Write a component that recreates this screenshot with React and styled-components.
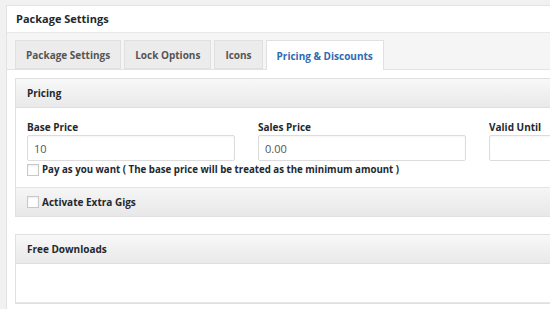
import React from 'react';
import styled, { createGlobalStyle } from 'styled-components';

const GlobalStyle = createGlobalStyle`
  html, body {
    margin: 0;
    padding: 0;
    background: #f1f1f1;
    overflow: hidden;
    font-family: "Open Sans", "Liberation Sans", Arial, sans-serif;
  }
`;

const tabs = ['Package Settings', 'Lock Options', 'Icons', 'Pricing & Discounts'];

function App() {
    return (
        <>
            <GlobalStyle />
            <Page>
                <MetaBox>
                    <BoxTitle>Package Settings</BoxTitle>
                    <TabBar>
                        {tabs.map((t, i) => (
                            <Tab key={t} $active={i === 3}>{t}</Tab>
                        ))}
                    </TabBar>
                    <TabContent>
                        <Panel>
                            <PanelHead>Pricing</PanelHead>
                            <PanelBody>
                                <Fields>
                                    <Field>
                                        <Label>Base Price</Label>
                                        <Input defaultValue="10" />
                                    </Field>
                                    <Field>
                                        <Label>Sales Price</Label>
                                        <Input defaultValue="0.00" />
                                    </Field>
                                    <Field>
                                        <Label>Valid Until</Label>
                                        <Input defaultValue="" />
                                    </Field>
                                </Fields>
                                <CheckRow $small>
                                    <Box />
                                    Pay as you want ( The base price will be treated as the minimum amount )
                                </CheckRow>
                            </PanelBody>
                            <PanelFoot>
                                <CheckRow>
                                    <Box />
                                    Activate Extra Gigs
                                </CheckRow>
                            </PanelFoot>
                        </Panel>
                        <Panel>
                            <PanelHead>Free Downloads</PanelHead>
                            <EmptyBody />
                        </Panel>
                    </TabContent>
                </MetaBox>
            </Page>
        </>
    );
}

const Page = styled.div`
    padding: 5px 0 0 6px;
    width: 640px;
`;

const MetaBox = styled.div`
    background: #fff;
    border: 1px solid #e3e3e3;
`;

const BoxTitle = styled.h2`
    margin: 0;
    height: 26px;
    line-height: 26px;
    padding-left: 9px;
    font-size: 11px;
    font-weight: 700;
    color: #23282d;
    border-bottom: 1px solid #e8e8e8;
`;

const TabBar = styled.div`
    display: flex;
    gap: 3px;
    padding: 7px 0 0 8px;
    background: #f5f5f5;
    border-bottom: 1px solid #e2e2e2;
    height: 29px;
`;

const Tab = styled.div`
    height: ${p => (p.$active ? '30px' : '29px')};
    margin-bottom: ${p => (p.$active ? '-1px' : '0')};
    padding: 0 10px;
    display: flex;
    align-items: center;
    box-sizing: border-box;
    border: 1px solid #e0e0e0;
    border-bottom: ${p => (p.$active ? 'none' : '1px solid #e0e0e0')};
    background: ${p => (p.$active ? '#fff' : '#ececec')};
    color: ${p => (p.$active ? '#2e6bb0' : '#555')};
    font-size: 10px;
    font-weight: 700;
`;

const TabContent = styled.div`
    padding: 8px 0 8px 8px;
    display: flex;
    flex-direction: column;
    gap: 17px;
`;

const Panel = styled.div`
    border: 1px solid #e0e0e0;
    background: #fff;
`;

const PanelHead = styled.div`
    height: 28px;
    line-height: 28px;
    padding-left: 11px;
    font-size: 10px;
    font-weight: 700;
    color: #23282d;
    background: linear-gradient(#f8f8f8, #e9e9e9);
    border-bottom: 1px solid #dedede;
`;

const PanelBody = styled.div`
    padding: 13px 11px 11px;
`;

const Fields = styled.div`
    display: grid;
    grid-template-columns: repeat(3, 208px);
    column-gap: 23px;
`;

const Field = styled.div`
    display: flex;
    flex-direction: column;
`;

const Label = styled.label`
    font-size: 10px;
    font-weight: 700;
    color: #23282d;
    line-height: 12px;
    margin-bottom: 2px;
`;

const Input = styled.input`
    box-sizing: border-box;
    height: 26px;
    width: 100%;
    border: 1px solid #dcdcdc;
    border-radius: 2px;
    padding: 0 6px;
    font-family: inherit;
    font-size: 11px;
    color: #555;
    box-shadow: inset 0 1px 2px rgba(0, 0, 0, 0.04);
    outline: none;
`;

const CheckRow = styled.div`
    display: flex;
    align-items: center;
    gap: 3px;
    margin-top: 2px;
    font-size: ${p => (p.$small ? '9.7px' : '10px')};
    font-weight: 700;
    color: #23282d;
`;

const Box = styled.span`
    box-sizing: border-box;
    width: 12px;
    height: 12px;
    border: 1px solid #c8c8c8;
    background: #fff;
    box-shadow: inset 0 1px 2px rgba(0, 0, 0, 0.08);
`;

const PanelFoot = styled.div`
    height: 28px;
    display: flex;
    align-items: center;
    padding-left: 11px;
    background: linear-gradient(#f6f6f6, #e8e8e8);
    border-top: 1px solid #e4e4e4;

    ${CheckRow} {
        margin-top: 0;
    }
`;

const EmptyBody = styled.div`
    height: 38px;
    border-bottom: 1px solid #e6e6e6;
`;

export default App;
